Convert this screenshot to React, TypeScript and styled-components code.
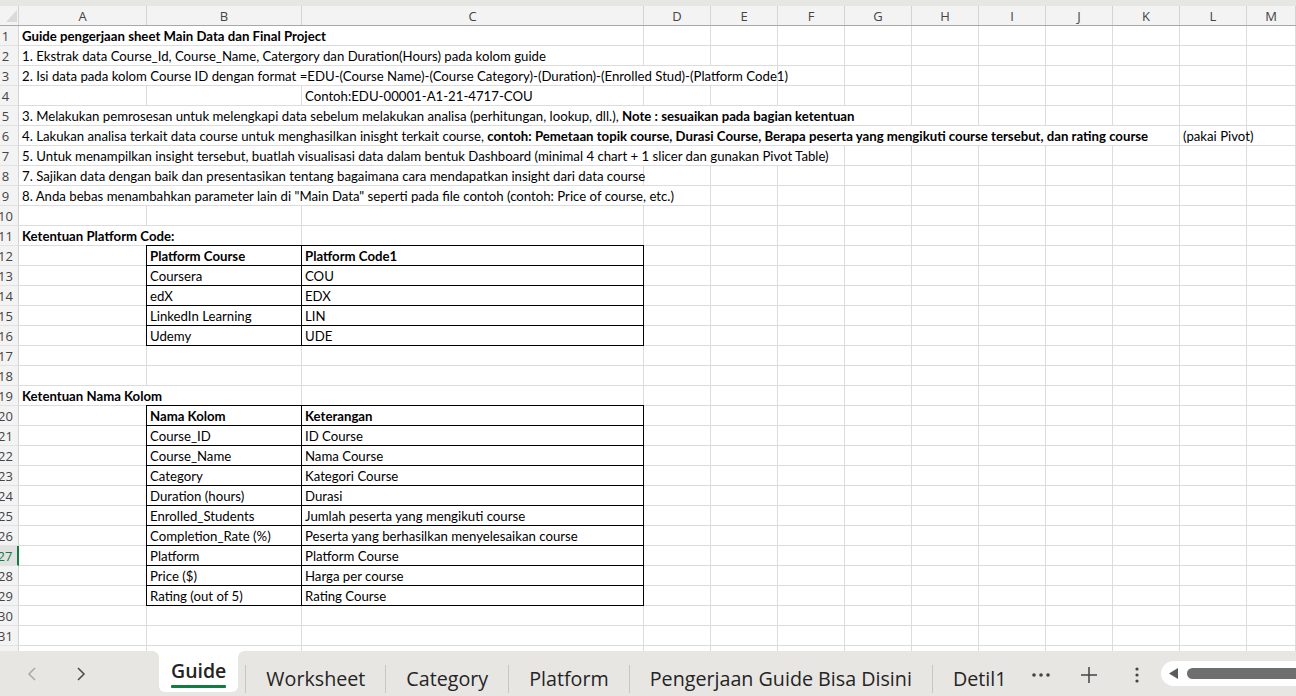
import React from 'react'
import styled, {createGlobalStyle, css} from 'styled-components'

const GRID = '#dcdcdc'
const GREEN = '#107c41'
const COLS = '19px 128px 155px 342px repeat(9, 67px) 1fr'
const LETTERS = ['A', 'B', 'C', 'D', 'E', 'F', 'G', 'H', 'I', 'J', 'K', 'L', 'M']

type CellData = {
    t?: React.ReactNode;
    span?: number;
    bold?: boolean;
    box?: boolean;
}

// fills a row up to the 13 visible columns
const row = (...cells: CellData[]): CellData[] => {
    const used = cells.reduce((n, c) => n + (c.span || 1), 0)
    return [...cells, ...Array.from({length: Math.max(0, 13 - used)}, () => ({}))]
}

const boxRow = (a: string, b: string, bold?: boolean) =>
    row({}, {t: a, box: true, bold}, {t: b, box: true, bold})

const ROWS: CellData[][] = [
    row({t: 'Guide pengerjaan sheet Main Data dan Final Project', span: 3, bold: true}),
    row({t: '1. Ekstrak data Course_Id, Course_Name, Catergory dan Duration(Hours) pada kolom guide', span: 3}),
    row({
        t: '2. Isi data pada kolom Course ID dengan format =EDU-(Course Name)-(Course Category)-(Duration)-(Enrolled Stud)-(Platform Code1)',
        span: 5
    }),
    row({}, {}, {t: 'Contoh:EDU-00001-A1-21-4717-COU'}),
    row({
        t: <>3. Melakukan pemrosesan untuk melengkapi data sebelum melakukan analisa (perhitungan, lookup,
            dll.), <b>Note : sesuaikan pada bagian ketentuan</b></>,
        span: 7
    }),
    row({
        t: <>4. Lakukan analisa terkait data course untuk menghasilkan inisght terkait course, <b>contoh: Pemetaan
            topik course, Durasi Course, Berapa peserta yang mengikuti course tersebut, dan rating course</b></>,
        span: 11
    }, {t: '(pakai Pivot)'}),
    row({
        t: '5. Untuk menampilkan insight tersebut, buatlah visualisasi data dalam bentuk Dashboard (minimal 4 chart + 1 slicer dan gunakan Pivot Table)',
        span: 6
    }),
    row({t: '7. Sajikan data dengan baik dan presentasikan tentang bagaimana cara mendapatkan insight dari data course', span: 3}),
    row({
        t: '8. Anda bebas menambahkan parameter lain di "Main Data" seperti pada file contoh (contoh: Price of course, etc.)',
        span: 4
    }),
    row(),
    row({t: 'Ketentuan Platform Code:', span: 2, bold: true}),
    boxRow('Platform Course', 'Platform Code1', true),
    boxRow('Coursera', 'COU'),
    boxRow('edX', 'EDX'),
    boxRow('LinkedIn Learning', 'LIN'),
    boxRow('Udemy', 'UDE'),
    row(),
    row(),
    row({t: 'Ketentuan Nama Kolom', span: 2, bold: true}),
    boxRow('Nama Kolom', 'Keterangan', true),
    boxRow('Course_ID', 'ID Course'),
    boxRow('Course_Name', 'Nama Course'),
    boxRow('Category', 'Kategori Course'),
    boxRow('Duration (hours)', 'Durasi'),
    boxRow('Enrolled_Students', 'Jumlah peserta yang mengikuti course'),
    boxRow('Completion_Rate (%)', 'Peserta yang berhasilkan menyelesaikan course'),
    boxRow('Platform', 'Platform Course'),
    boxRow('Price ($)', 'Harga per course'),
    boxRow('Rating (out of 5)', 'Rating Course'),
    row(),
    row(),
    row(),
]

const SELECTED_ROW = 27
const TABS = ['Worksheet', 'Category', 'Platform', 'Pengerjaan Guide Bisa Disini', 'Detil1']

const App = () => {
    return (
        <>
            <GlobalStyle/>
            <Window>
                <TopStrip/>
                <Sheet>
                    <HeaderRow>
                        <Corner>
                            <svg width="11" height="12" viewBox="0 0 11 12">
                                <polygon points="11,0 11,12 0,12" fill="#dadada"/>
                            </svg>
                        </Corner>
                        {LETTERS.map((l) => (
                            <ColHead key={l}>{l}</ColHead>
                        ))}
                    </HeaderRow>
                    {ROWS.map((cells, i) => (
                        <Row key={i}>
                            <RowHead $selected={i + 1 === SELECTED_ROW}>{i + 1}</RowHead>
                            {cells.map((c, j) => (
                                <Cell key={j} $span={c.span} $bold={c.bold} $box={c.box}>
                                    {c.t}
                                </Cell>
                            ))}
                        </Row>
                    ))}
                </Sheet>
                <TabBar>
                    <Nav>
                        <svg width="12" height="14" viewBox="0 0 12 14">
                            <polyline points="9,1 3,7 9,13" fill="none" stroke="#a9a9a9" strokeWidth="1.5"/>
                        </svg>
                        <svg width="12" height="14" viewBox="0 0 12 14">
                            <polyline points="3,1 9,7 3,13" fill="none" stroke="#4a4a4a" strokeWidth="1.5"/>
                        </svg>
                    </Nav>
                    <ActiveTab>
                        <ActiveLabel>Guide</ActiveLabel>
                        <Underline/>
                    </ActiveTab>
                    {TABS.map((t) => (
                        <React.Fragment key={t}>
                            <TabSep/>
                            <Tab>{t}</Tab>
                        </React.Fragment>
                    ))}
                    <Tools>
                        <svg width="18" height="4" viewBox="0 0 18 4">
                            <circle cx="2" cy="2" r="1.8" fill="#444"/>
                            <circle cx="9" cy="2" r="1.8" fill="#444"/>
                            <circle cx="16" cy="2" r="1.8" fill="#444"/>
                        </svg>
                        <svg width="18" height="18" viewBox="0 0 18 18">
                            <path d="M9 1v16M1 9h16" stroke="#444" strokeWidth="1.5"/>
                        </svg>
                        <svg width="4" height="16" viewBox="0 0 4 16">
                            <circle cx="2" cy="2" r="1.6" fill="#444"/>
                            <circle cx="2" cy="8" r="1.6" fill="#444"/>
                            <circle cx="2" cy="14" r="1.6" fill="#444"/>
                        </svg>
                    </Tools>
                    <Scroll>
                        <svg width="10" height="11" viewBox="0 0 10 11">
                            <polygon points="10,0 10,11 1,5.5" fill="#5c5c5c"/>
                        </svg>
                        <Thumb/>
                    </Scroll>
                </TabBar>
            </Window>
        </>
    )
}
export default App

// ==========================================

const GlobalStyle = createGlobalStyle`
  html, body {
    margin: 0;
    padding: 0;
    background: #ffffff;
    overflow: hidden;
  }

  * {
    box-sizing: border-box;
  }
`

const Window = styled.div`
  width: 1296px;
  height: 696px;
  display: flex;
  flex-direction: column;
  overflow: hidden;
  background: #fff;
`

const TopStrip = styled.div`
  height: 6px;
  flex: none;
  background: #e6e6e3;
`

const Sheet = styled.div`
  flex: 1;
  overflow: hidden;
  font-family: "Lato", "Liberation Sans", sans-serif;
  font-size: 13.2px;
  color: #000;
`

const HeaderRow = styled.div`
  display: grid;
  grid-template-columns: ${COLS};
  height: 20px;
  background: #f3f3f3;
  border-bottom: 1px solid #a8a8a8;
`

const Corner = styled.div`
  display: flex;
  align-items: flex-end;
  justify-content: flex-end;
  padding: 0 1px 3px 0;
  border-right: 1px solid #d4d4d4;
`

const ColHead = styled.div`
  display: flex;
  align-items: center;
  justify-content: center;
  border-right: 1px solid #d4d4d4;
  font-family: "Open Sans", "Noto Sans", sans-serif;
  font-size: 13px;
  color: #444;
`

const Row = styled.div`
  display: grid;
  grid-template-columns: ${COLS};
  height: 20px;
`

const RowHead = styled.div<{ $selected?: boolean }>`
  display: flex;
  align-items: center;
  justify-content: center;
  padding-right: 7px;
  overflow: hidden;
  background: #f3f3f3;
  border-right: 1px solid #d4d4d4;
  border-bottom: 1px solid #e2e2e2;
  font-family: "Open Sans", "Noto Sans", sans-serif;
  font-size: 13px;
  color: #444;
  ${(props) =>
          props.$selected &&
          css`
            background: #e1e1e1;
            color: ${GREEN};
            border-right: 2px solid ${GREEN};
          `}
`

const Cell = styled.div<{ $span?: number; $bold?: boolean; $box?: boolean }>`
  grid-column: span ${(props) => props.$span || 1};
  height: 20px;
  padding: 0 0 0 3px;
  line-height: 20px;
  white-space: nowrap;
  border-right: 1px solid ${GRID};
  border-bottom: 1px solid ${GRID};
  font-weight: ${(props) => (props.$bold ? 700 : 400)};

  b {
    font-weight: 700;
  }

  ${(props) =>
          props.$box &&
          css`
            border-right-color: #000;
            border-bottom-color: #000;
            box-shadow: -1px 0 0 #000, 0 -1px 0 #000, -1px -1px 0 #000;
          `}
`

const TabBar = styled.div`
  height: 45px;
  flex: none;
  display: flex;
  align-items: center;
  background: #e8e6e3;
  font-family: "Open Sans", "Noto Sans", sans-serif;
  color: #242424;
`

const Nav = styled.div`
  width: 159px;
  height: 100%;
  display: flex;
  align-items: center;
  padding: 0 0 0 26px;
  gap: 37px;
  flex: none;
`

const ActiveTab = styled.div`
  position: relative;
  align-self: flex-start;
  display: flex;
  flex-direction: column;
  padding: 8px 12px 4px;
  background: #fff;
  border-radius: 0 0 6px 6px;

  // concave corners joining the sheet above
  &::before, &::after {
    content: "";
    position: absolute;
    top: 0;
    width: 6px;
    height: 6px;
  }

  &::before {
    left: -6px;
    background: radial-gradient(circle at 0 100%, transparent 5.5px, #fff 6px);
  }

  &::after {
    right: -6px;
    background: radial-gradient(circle at 100% 100%, transparent 5.5px, #fff 6px);
  }
`

const ActiveLabel = styled.div`
  font-size: 19.5px;
  font-weight: 600;
  line-height: 24px;
`

const Underline = styled.div`
  height: 3px;
  margin-top: 2px;
  border-radius: 1px;
  background: ${GREEN};
`

const TabSep = styled.div`
  width: 1px;
  height: 28px;
  margin: 10px 0 0 7px;
  flex: none;
  background: #c8c6c4;
`

const Tab = styled.div`
  padding: 0 20px;
  margin-top: 10px;
  font-size: 19.7px;
  line-height: 28px;
  white-space: nowrap;

  & + ${TabSep} {
    margin-left: 0;
  }
`

const Tools = styled.div`
  display: flex;
  align-items: center;
  gap: 30px;
  padding: 2px 0 0 6px;
  flex: none;

  & > svg:last-child {
    margin-left: 7px;
  }
`

const Scroll = styled.div`
  margin-left: 22px;
  flex: 1;
  height: 25px;
  display: flex;
  align-items: center;
  gap: 9px;
  padding-left: 7px;
  margin-right: -20px;
  background: #fff;
  border-radius: 13px;
`

const Thumb = styled.div`
  flex: 1;
  height: 11px;
  border-radius: 6px;
  background: #6f6f6f;
`
